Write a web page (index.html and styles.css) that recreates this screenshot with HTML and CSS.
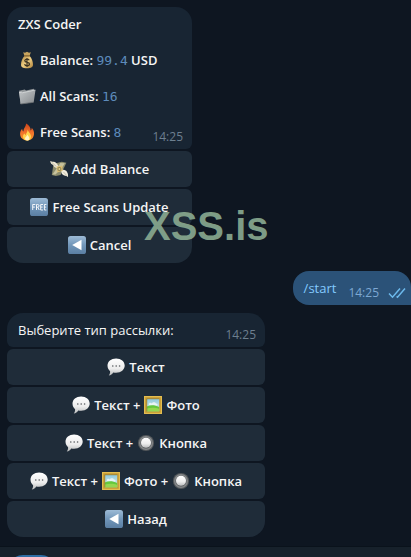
FILE: index.html
```html
<!DOCTYPE html>
<html lang="ru">
<head>
<meta charset="utf-8">
<meta name="viewport" content="width=device-width, initial-scale=1">
<title>ZXS Coder</title>
<link rel="stylesheet" href="styles.css">
</head>
<body>
<svg class="sprite" aria-hidden="true" width="0" height="0">
  <defs>
    <linearGradient id="blue" x1="0" y1="0" x2="0" y2="1"><stop offset="0" stop-color="#9dbbd6"/><stop offset=".5" stop-color="#7196b9"/><stop offset="1" stop-color="#5b7fa3"/></linearGradient>
    <linearGradient id="grey" x1="0" y1="0" x2="1" y2="1"><stop offset="0" stop-color="#c3c7c9"/><stop offset="1" stop-color="#85898c"/></linearGradient>
    <linearGradient id="white" x1="0" y1="0" x2="0" y2="1"><stop offset="0" stop-color="#ffffff"/><stop offset=".6" stop-color="#ececec"/><stop offset="1" stop-color="#b9bbbc"/></linearGradient>
    <linearGradient id="gold" x1="0" y1="0" x2="1" y2="1"><stop offset="0" stop-color="#b18a45"/><stop offset=".5" stop-color="#f0cf83"/><stop offset="1" stop-color="#a97d37"/></linearGradient>
    <linearGradient id="fire" x1="0" y1="0" x2="0" y2="1"><stop offset="0" stop-color="#c9431b"/><stop offset=".5" stop-color="#f0702a"/><stop offset="1" stop-color="#fa9a2c"/></linearGradient>
    <linearGradient id="sky" x1="0" y1="0" x2="0" y2="1"><stop offset="0" stop-color="#8ec9df"/><stop offset="1" stop-color="#e4f3e4"/></linearGradient>
  </defs>
  <symbol id="bag" viewBox="0 0 18 18">
    <path d="M5.2 1.2 7 1.7 9 .8l2 .9 1.8-.4-1.3 3.6h-5z" fill="#c7a45e"/>
    <path d="M6.4 5h5.300c2 2.300 3.300 5.400 3.300 8.600 0 2.600-1.500 3.700-6 3.700s-6-1.100-6-3.700C3 10.400 4.400 7.300 6.400 5z" fill="url(#gold)"/>
    <path d="M6.200 4.900h5.600" stroke="#80602c" stroke-width="1.200"/>
    <path d="M11.300 9.300C10.800 8.500 10 8.200 9 8.200c-1.300 0-2.200.6-2.200 1.600 0 2.300 4.700 1 4.700 3.300 0 1.100-1 1.700-2.400 1.700-1.200 0-2.200-.5-2.600-1.500M9 7v9" fill="none" stroke="#3d3423" stroke-width="1.200"/>
  </symbol>
  <symbol id="folder" viewBox="0 0 18 18">
    <path d="M1 3.800 6.800 2.600l1.200 1 8-1.800L15 15.500 2.600 17z" fill="#92979a"/>
    <path d="M1 5.300 3.300 5l1 .7L17.500 3l-1.800 12.300L2.700 17z" fill="url(#grey)"/>
    <path d="M1.200 5.500 3.300 5l1 .7L17.300 3" fill="none" stroke="#e3e5e6" stroke-width=".7"/>
    <path d="M15.700 15.300 2.700 17" stroke="#62676b" stroke-width=".8"/>
  </symbol>
  <symbol id="flame" viewBox="0 0 18 18">
    <path d="M8 .5c3 1.500 4.800 4 4.600 7 .8-.6 1.200-1.600 1.100-2.800 1.800 1.900 2.600 4.200 2.300 6.600-.4 3.800-3 6.200-6.700 6.200-4.200 0-7.200-2.700-7.200-6.400 0-2.300.8-4 2.100-5.300.1 1.300.5 2.200 1.300 2.800C5.300 5.200 8.200 3.500 8 .5z" fill="url(#fire)"/>
    <path d="M9.600 6.500c.3 2.200 3.400 4 3.400 7 0 2.400-1.600 4-3.900 4S5 16 5 13.800c0-1.400.7-2.500 1.600-3.200.1.900.5 1.400 1.100 1.700C8 10 9.800 9.200 9.600 6.500z" fill="#ffd44c"/>
    <path d="M9.500 11.500c.2 1.500 1.900 2.100 1.900 3.900 0 1.300-.9 2.100-2.200 2.100S7 16.700 7 15.600c0-1.500 1.900-2.300 2.500-4.100z" fill="#fff4c2"/>
  </symbol>
  <symbol id="money" viewBox="0 0 18 18">
    <path d="M3.500 4.200 7 3l4.800-1.300 4.600 1L10.500 15l-4.700 1-4-1z" fill="#8c8c6c"/>
    <path d="m10.300 3 4.600.3-3.300 5-6.100 6.300-3-.2z" fill="#c6c29d"/>
    <path d="M7.500 8.200C5 7.600 3.700 6.700 3.300 5 1.700 4.500.4 3.300.2.900c1.900 1.300 3.300.1 5.100 1.300C7.100 3.300 8.300 5.300 8.600 7z" fill="#efe9d6"/>
    <path d="M11.400 10.200c2.400-1 5 0 5.600 1.900 1 1.100 1.200 3 .9 5-2-1.800-3.900-1-5.300-2.500-1.100-1.100-1.500-2.800-1.200-4.400z" fill="#f2eddd"/>
    <path d="m6.500 6.500 5.700-.8.5 5-5.400 1.800z" fill="#d9bd70"/>
    <circle cx="9.400" cy="9" r="2" fill="#8d8252"/>
    <circle cx="9.400" cy="9" r="1" fill="#e7cf89"/>
    <path d="m1.600 2.200 4.600 4.200M16.900 15.700l-3.500-3.800" stroke="#aaa58d" stroke-width=".6"/>
  </symbol>
  <symbol id="free" viewBox="0 0 18 18">
    <rect width="18" height="18" rx="2.600" fill="url(#blue)"/>
    <path d="M2.700 12V6.500h2.600M2.700 9.100h2.200M6.500 12V6.500h1.200c1.900 0 1.900 2.700 0 2.700H6.500m1.300 0L9.200 12M13 6.500h-2.300V12H13m-2.300-2.900h2M16.400 6.500h-2V12h2m-2-2.900h1.800" fill="none" stroke="#fff" stroke-width=".9"/>
  </symbol>
  <symbol id="back" viewBox="0 0 18 18">
    <rect width="18" height="18" rx="2.600" fill="url(#blue)"/>
    <path d="M13.500 3.800v10.400L4.200 9z" fill="#fff"/>
  </symbol>
  <symbol id="speech" viewBox="0 0 18 18">
    <path d="M9.100.4c5 0 8.600 3.100 8.600 7.200s-3.600 7.200-8.600 7.200c-1 0-2-.1-2.900-.4-1 1.700-2.400 2.700-4.400 3 1-1.200 1.400-2.500 1.300-4.100C1.500 12 .5 10 .5 7.600.5 3.500 4.100.4 9.100.4z" fill="url(#white)"/>
    <circle cx="5.800" cy="8" r=".8" fill="#55595c"/><circle cx="9.200" cy="8" r=".8" fill="#55595c"/><circle cx="12.600" cy="8" r=".8" fill="#55595c"/>
  </symbol>
  <symbol id="picture" viewBox="0 0 18 18">
    <rect width="18" height="18" fill="#c49830"/>
    <path d="M.6.600h16.800v16.800H.600z" fill="none" stroke="#e3bd50" stroke-width="1.200"/>
    <rect x="2.800" y="2.800" width="12.400" height="12.400" fill="url(#sky)"/>
    <path d="M5 8c0-1.600 2.200-1.700 2.700-.6C8.700 5.500 11.500 6 12 7.500c1.700 0 2 1.500 1 2H5z" fill="#fff" opacity=".7"/>
    <path d="M2.800 10.500c4-2 8-1.500 12.400.5v4.200H2.800z" fill="#65c83d"/>
    <path d="M2.800 12.500c5-1 8-1 12.400.4v2.300H2.800z" fill="#94d750"/>
    <path d="M2.800 15.200V2.800h12.400" fill="none" stroke="#8c6b1d" stroke-width=".6"/>
  </symbol>
  <symbol id="radio" viewBox="0 0 18 18">
    <circle cx="9" cy="9" r="8.100" fill="#54585b"/>
    <circle cx="9" cy="9" r="7" fill="#85888a"/>
    <circle cx="9" cy="9" r="5.700" fill="#626567"/>
    <circle cx="9" cy="8.800" r="5" fill="url(#white)"/>
  </symbol>
</svg>

<main class="chat">
  <section class="message narrow">
    <div class="bubble">
      <div class="lines strong">
        <p class="title">ZXS Coder</p>
        <p><svg class="emoji"><use href="#bag"/></svg><span>Balance: <code>99.4</code> USD</span></p>
        <p><svg class="emoji"><use href="#folder"/></svg><span>All Scans: <code>16</code></span></p>
        <p><svg class="emoji"><use href="#flame"/></svg><span>Free Scans: <code>8</code></span></p>
      </div>
      <time>14:25</time>
    </div>
    <button type="button"><svg class="emoji"><use href="#money"/></svg>Add Balance</button>
    <button type="button"><svg class="emoji"><use href="#free"/></svg>Free Scans Update</button>
    <button type="button"><svg class="emoji"><use href="#back"/></svg>Cancel</button>
    <span class="watermark">XSS.is</span>
  </section>

  <section class="sent">
    <a href="#start">/start</a>
    <time>14:25</time>
    <svg class="ticks" viewBox="0 0 18 12" aria-hidden="true"><path d="m1 6.500 3.500 3.700L12 1.500M8.600 9.400l.9.800L17 1.500"/></svg>
  </section>

  <section class="message wide">
    <div class="bubble">
      <p>Выберите тип рассылки:</p>
      <time>14:25</time>
    </div>
    <button type="button"><svg class="emoji"><use href="#speech"/></svg>Текст</button>
    <button type="button"><svg class="emoji"><use href="#speech"/></svg>Текст + <svg class="emoji"><use href="#picture"/></svg>Фото</button>
    <button type="button"><svg class="emoji"><use href="#speech"/></svg>Текст + <svg class="emoji"><use href="#radio"/></svg>Кнопка</button>
    <button type="button"><svg class="emoji"><use href="#speech"/></svg>Текст + <svg class="emoji"><use href="#picture"/></svg>Фото + <svg class="emoji"><use href="#radio"/></svg>Кнопка</button>
    <button type="button"><svg class="emoji"><use href="#back"/></svg>Назад</button>
  </section>
</main>
<footer class="composer"><button type="button" class="menu" aria-label="Menu"></button></footer>
</body>
</html>
```
FILE: styles.css
```css
* {
  box-sizing: border-box;
}

body {
  display: flex;
  flex-direction: column;
  height: 100vh;
  margin: 0;
  overflow: hidden;
  background: #0e1621;
  color: #f5f5f5;
  font: 13px/18px "Open Sans", "Noto Sans", sans-serif;
}

p {
  margin: 0;
}

.sprite {
  position: absolute;
}

.chat {
  display: flex;
  flex-direction: column;
  flex-shrink: 0;
  gap: 8px;
  padding: 7px 0 9px 7px;
}

.message {
  position: relative;
  display: flex;
  flex-direction: column;
  gap: 2px;
  max-width: 100%;
}

.narrow {
  width: 185px;
}

.wide {
  width: 258px;
}

.bubble {
  display: grid;
  padding: 8px 9px 8px 11px;
  border-radius: 16px 16px 6px 6px;
  background: #182533;
}

.bubble > * {
  grid-area: 1 / 1;
}

.bubble time {
  align-self: end;
  justify-self: end;
}

.lines {
  display: flex;
  flex-direction: column;
  gap: 18px;
}

.lines p {
  display: flex;
  align-items: center;
  gap: 4px;
}

.strong {
  font-weight: 600;
}

code {
  color: #5d8bbb;
  font: 13px/1 "DejaVu Sans Mono", monospace;
}

time {
  margin-bottom: -5px;
  color: #6d7f8f;
  font-size: 12px;
}

.message button {
  display: flex;
  align-items: center;
  justify-content: center;
  gap: 4px;
  height: 36px;
  padding: 0;
  border: 0;
  border-radius: 6px;
  background: #1f2c39;
  color: #f5f5f5;
  font: inherit;
  font-weight: 600;
  white-space: nowrap;
}

.message button:last-of-type {
  border-radius: 6px 6px 16px 16px;
}

.emoji {
  flex: none;
  width: 18px;
  height: 18px;
}

.watermark {
  position: absolute;
  bottom: 14px;
  left: 137px;
  color: #8aab91;
  font: bold 40px/46px "Liberation Sans", Arial, sans-serif;
  opacity: 0.9;
  pointer-events: none;
}

.sent {
  display: flex;
  align-items: flex-end;
  align-self: flex-end;
  padding: 8px 5px 8px 11px;
  border-radius: 16px 16px 0 16px;
  background: #2b5278;
}

.sent a {
  color: #83caff;
  text-decoration: none;
}

.sent time {
  margin-left: 12px;
  color: #7da8d3;
}

.ticks {
  width: 18px;
  height: 12px;
  margin: 0 0 -2px 9px;
  fill: none;
  stroke: #6cb9ec;
  stroke-width: 1.5;
}

.composer {
  flex: 1;
  padding: 8px 8px 0;
  border-top: 1px solid #0a121b;
  background: #17212b;
}

.menu {
  display: block;
  width: 48px;
  height: 30px;
  padding: 0;
  border: 0;
  border-radius: 15px;
  background: #2f6ea5;
}
```
